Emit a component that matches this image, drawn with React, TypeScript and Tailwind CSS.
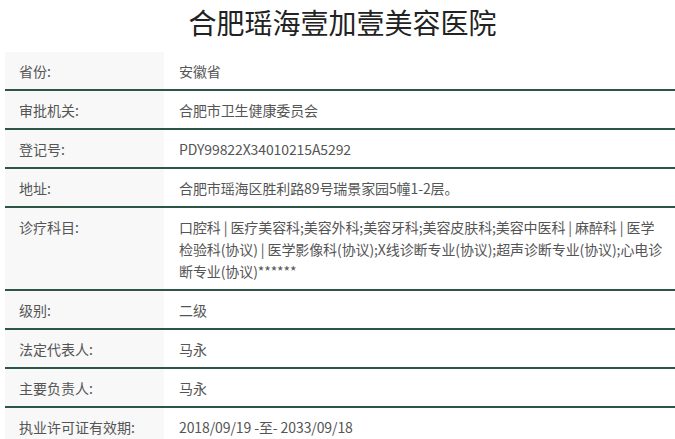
import React from 'react'

const rows: [string, React.ReactNode][] = [
  ['省份:', '安徽省'],
  ['审批机关:', '合肥市卫生健康委员会'],
  ['登记号:', 'PDY99822X34010215A5292'],
  ['地址:', '合肥市瑶海区胜利路89号瑞景家园5幢1-2层。'],
  [
    '诊疗科目:',
    <>
      口腔科 | 医疗美容科;美容外科;美容牙科;美容皮肤科;美容中医科 | 麻醉科 | 医学
      <br />
      检验科(协议) | 医学影像科(协议);X线诊断专业(协议);超声诊断专业(协议);心电诊
      <br />
      断专业(协议)******
    </>,
  ],
  ['级别:', '二级'],
  ['法定代表人:', '马永'],
  ['主要负责人:', '马永'],
  ['执业许可证有效期:', '2018/09/19 -至- 2033/09/18'],
]

export default function App() {
  return (
    <div
      className="bg-white text-[#555] w-[675px]"
      style={{ fontFamily: '"Noto Sans CJK SC", "Noto Sans", sans-serif' }}
    >
      <h1 className="h-[52px] pl-[10px] text-center text-[28px] leading-[44px] text-[#222] font-normal">
        合肥瑶海壹加壹美容医院
      </h1>
      <div className="ml-[5px]">
        {rows.map(([k, v], i) => (
          <div
            key={k}
            className={`flex text-[14px] leading-[22px] ${i < rows.length - 1 ? 'border-b-2 border-[#2b5646]' : ''}`}
          >
            <div className="w-[159px] shrink-0 bg-[#f8f8f8] pl-[14px] pt-[8px] pb-[7px] text-[#555]">{k}</div>
            <div className="flex-1 pl-[15px] pt-[8px] pb-[7px] text-[#555] whitespace-nowrap tracking-[-0.1px]">{v}</div>
          </div>
        ))}
      </div>
    </div>
  )
}
